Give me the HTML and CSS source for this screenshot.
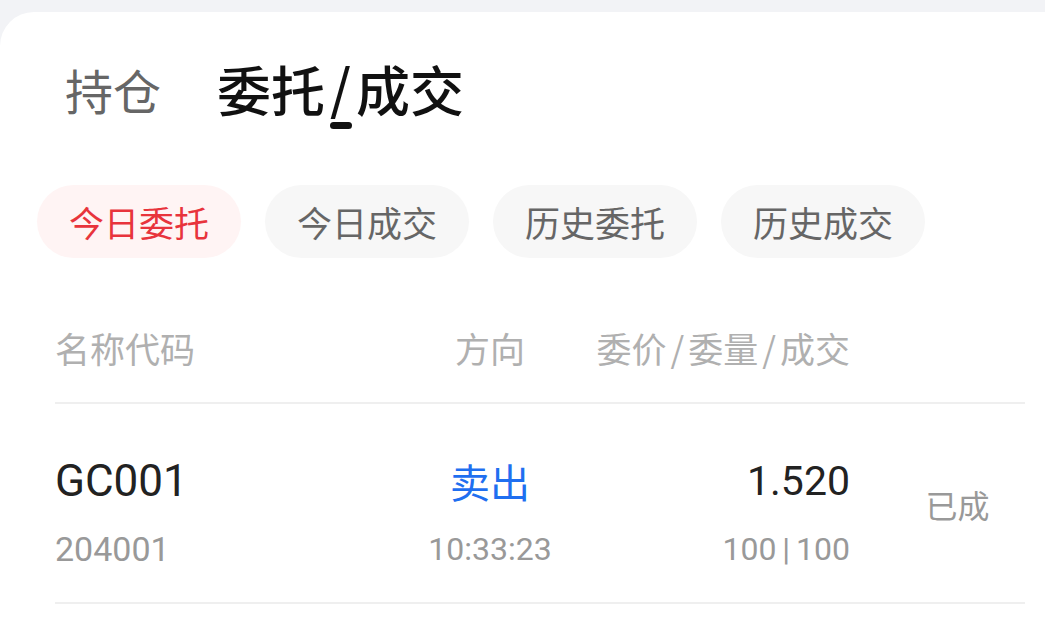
FILE: index.html
```html
<!DOCTYPE html>
<html lang="zh-CN">
<head>
    <meta charset="UTF-8">
    <meta name="viewport" content="width=device-width, initial-scale=1.0">
    <title>委托/成交</title>
    <link rel="stylesheet" href="styles.css">
</head>
<body>
    <div class="card">
        <div class="tabs">
            <div class="tab">
                <span class="tab-text">持仓</span>
            </div>
            <div class="tab active">
                <span class="tab-text">委托<span class="sep">/</span>成交</span>
                <span class="tab-line"></span>
            </div>
        </div>

        <div class="chips">
            <div class="chip active">今日委托</div>
            <div class="chip">今日成交</div>
            <div class="chip">历史委托</div>
            <div class="chip">历史成交</div>
        </div>

        <div class="table">
            <div class="thead">
                <div class="th">名称代码</div>
                <div class="th center">方向</div>
                <div class="th right">委价<span class="sep">/</span>委量<span class="sep">/</span>成交</div>
                <div class="th"></div>
            </div>
            <div class="row">
                <div class="cell">
                    <span class="main num">GC001</span>
                    <span class="sub num code">204001</span>
                </div>
                <div class="cell center">
                    <span class="main sell">卖出</span>
                    <span class="sub num">10:33:23</span>
                </div>
                <div class="cell right">
                    <span class="main num price">1.520</span>
                    <span class="sub num volume">100 | 100</span>
                </div>
                <div class="cell status">已成</div>
            </div>
        </div>
    </div>
</body>
</html>
```
FILE: styles.css
```css
body {
    margin: 0;
    padding: 0;
    background-color: #f2f3f6;
    font-family: Roboto, "Noto Sans CJK SC", sans-serif;
    color: #222;
    overflow: hidden;
}
.card {
    margin-top: 12px;
    background-color: #fff;
    border-top-left-radius: 34px;
    height: 616px;
}

/* top tabs */
.tabs {
    display: flex;
    gap: 56px;
    padding: 47px 0 0 65px;
}
.tab {
    display: flex;
    flex-direction: column;
    align-items: center;
}
.tab-text {
    font-family: "Noto Sans CJK SC", sans-serif;
    font-size: 48px;
    line-height: 60px;
    color: #666;
}
.tab.active .tab-text {
    font-size: 54px;
    color: #111;
    font-weight: 500;
}
.tab-text .sep {
    display: inline-block;
    margin: 0 5px;
    transform: translateY(-3px);
}
.tab-line {
    width: 22px;
    height: 7px;
    margin-top: 3px;
    border-radius: 4px;
    background-color: #111;
}

/* filter chips */
.chips {
    display: flex;
    gap: 24px;
    padding: 0 37px;
    margin-top: 56px;
}
.chip {
    width: 204px;
    height: 73px;
    border-radius: 37px;
    background-color: #f7f7f7;
    color: #666;
    font-family: "Noto Sans CJK SC", sans-serif;
    font-size: 35px;
    line-height: 73px;
    text-align: center;
}
.chip.active {
    background-color: #fff4f4;
    color: #e8343c;
}

/* orders table */
.table {
    margin: 0 20px 0 55px;
}
.thead, .row {
    display: grid;
    grid-template-columns: 335px 200px 260px 1fr;
    border-bottom: 2px solid #efefef;
}
.thead {
    padding: 70px 0 34px;
}
.th {
    font-family: "Noto Sans CJK SC", sans-serif;
    font-size: 35px;
    line-height: 40px;
    color: #b0b0b0;
}
.th .sep {
    margin: 0 4px;
}
.center {
    text-align: center;
}
.right {
    text-align: right;
}
.row {
    padding: 52px 0 33px;
}
.cell {
    display: flex;
    flex-direction: column;
    gap: 23px;
}
.cell.center {
    align-items: center;
}
.cell.right {
    align-items: flex-end;
}
.main {
    font-size: 44px;
    line-height: 50px;
    color: #222;
}
.main.price {
    font-size: 41px;
}
.sell {
    font-family: "Noto Sans CJK SC", sans-serif;
    font-size: 40px;
    color: #1f6ff0;
}
.sub {
    font-size: 32px;
    line-height: 40px;
    color: #999;
}
.sub.code {
    font-size: 34px;
}
.sub.volume {
    word-spacing: -2px;
}
.status {
    justify-content: center;
    align-items: center;
    padding: 0 0 18px 40px;
    font-family: "Noto Sans CJK SC", sans-serif;
    font-size: 32px;
    color: #999;
}
```
